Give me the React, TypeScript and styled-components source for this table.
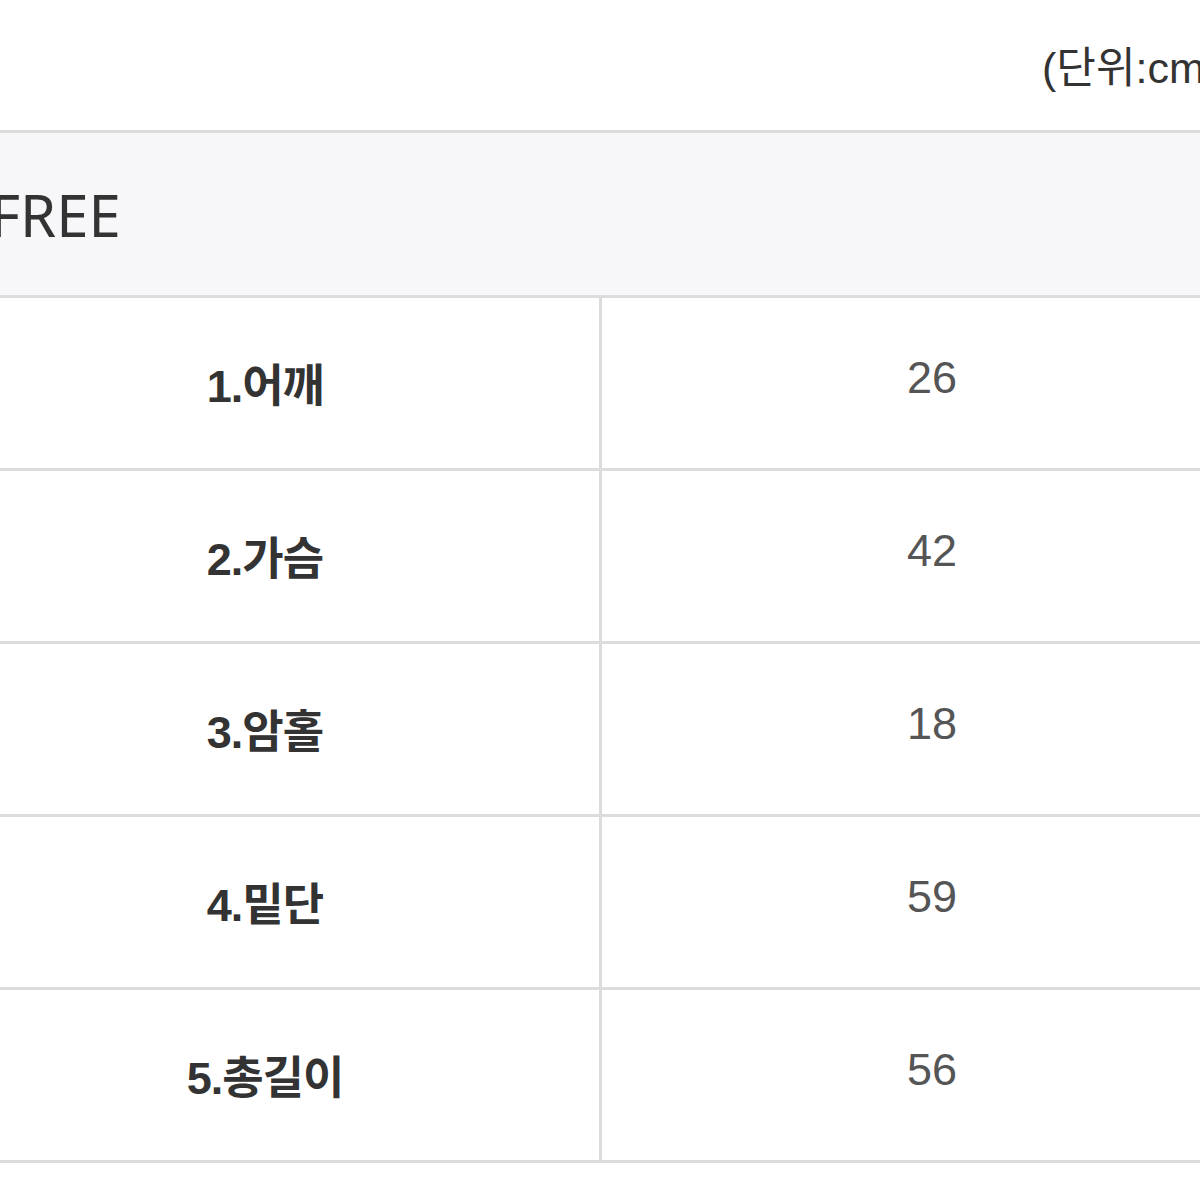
import styled, { createGlobalStyle } from "styled-components"

const GlobalStyle = createGlobalStyle`
    html, body {
        margin: 0;
        padding: 0;
        background: #ffffff;
        overflow: hidden;
    }
    body {
        font-family: "Liberation Sans", "Noto Sans CJK KR", sans-serif;
        color: #333333;
    }
`

const sizes = [
    { label: "1.어깨", value: "26" },
    { label: "2.가슴", value: "42" },
    { label: "3.암홀", value: "18" },
    { label: "4.밑단", value: "59" },
    { label: "5.총길이", value: "56" },
]

function App(){
    return(
        <>
            <GlobalStyle />
            <Page>
                <Unit>(단위:cm)</Unit>
                <SizeTable>
                    <HeaderRow>FREE</HeaderRow>
                    {sizes.map((row) => (
                        <Row key={row.label}>
                            <LabelCell>{row.label}</LabelCell>
                            <ValueCell>{row.value}</ValueCell>
                        </Row>
                    ))}
                </SizeTable>
            </Page>
        </>
    )
}

export default App

const Page = styled.div`
    width: 1331px;
    margin-left: -69px;
`

const Unit = styled.div`
    height: 130px;
    box-sizing: border-box;
    padding-left: 1111px;
    padding-top: 38px;
    font-family: "Liberation Sans", "Noto Sans CJK KR", sans-serif;
    font-size: 43px;
    line-height: 60px;
    color: #333333;
    white-space: nowrap;
`

const SizeTable = styled.div`
    border-top: 3px solid #dcdcdc;
`

const HeaderRow = styled.div`
    height: 162px;
    display: flex;
    align-items: center;
    padding-left: 59px;
    background: #f7f7f9;
    border-bottom: 3px solid #dcdcdc;
    font-family: "Noto Sans", sans-serif;
    font-size: 58px;
    color: #333333;
`

const Row = styled.div`
    display: grid;
    grid-template-columns: 671px 1fr;
    height: 170px;
    border-bottom: 3px solid #dcdcdc;
    &:first-of-type {
        height: 169px;
    }
`

const LabelCell = styled.div`
    display: flex;
    align-items: center;
    justify-content: center;
    border-right: 3px solid #dcdcdc;
    font-family: "Liberation Sans", "Noto Sans CJK KR", sans-serif;
    font-weight: 700;
    font-size: 45px;
    letter-spacing: -1px;
    color: #333333;
    padding-bottom: 2px;
    box-sizing: border-box;
`

const ValueCell = styled.div`
    display: flex;
    align-items: center;
    justify-content: center;
    padding-bottom: 10px;
    box-sizing: border-box;
    font-family: "Liberation Sans", sans-serif;
    font-size: 45px;
    color: #555555;
`
